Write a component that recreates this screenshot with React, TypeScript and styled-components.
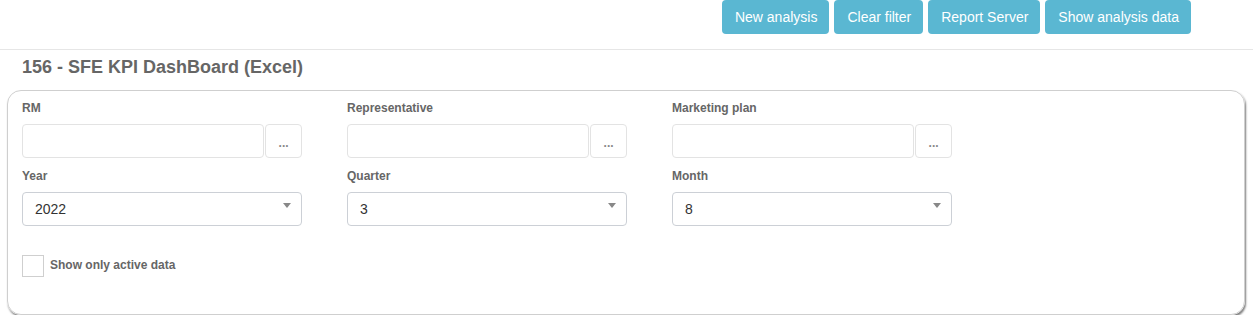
import styled, { createGlobalStyle } from "styled-components";

const GlobalStyle = createGlobalStyle`
  body {
    margin: 0;
    background: #fff;
    font-family: "Liberation Sans", Arial, sans-serif;
  }
`;

const lookupFields = ["RM", "Representative", "Marketing plan"];
const selectFields = [
  { label: "Year", value: "2022" },
  { label: "Quarter", value: "3" },
  { label: "Month", value: "8" },
];
const actions = ["New analysis", "Clear filter", "Report Server", "Show analysis data"];

export default function App() {
  return (
    <>
      <GlobalStyle />
      <TopBar>
        {actions.map((a) => (
          <ActionButton key={a}>{a}</ActionButton>
        ))}
      </TopBar>
      <Title>156 - SFE KPI DashBoard (Excel)</Title>
      <FilterCard>
        <FieldGrid>
          {lookupFields.map((f) => (
            <Field key={f}>
              <Label>{f}</Label>
              <LookupGroup>
                <TextInput />
                <DotsButton>...</DotsButton>
              </LookupGroup>
            </Field>
          ))}
          {selectFields.map((f) => (
            <Field key={f.label}>
              <Label>{f.label}</Label>
              <Select>
                <span>{f.value}</span>
                <Caret />
              </Select>
            </Field>
          ))}
        </FieldGrid>
        <CheckRow>
          <CheckBox />
          <CheckLabel>Show only active data</CheckLabel>
        </CheckRow>
      </FilterCard>
    </>
  );
}

const TopBar = styled.div`
  display: flex;
  justify-content: flex-end;
  align-items: flex-start;
  gap: 5px;
  height: 49px;
  padding-right: 62px;
  border-bottom: 1px solid #e6e6e6;
`;

const ActionButton = styled.div`
  display: flex;
  align-items: center;
  height: 34px;
  padding: 0 12px 0 13px;
  background: #5ab7d2;
  color: #fff;
  font-size: 14px;
  border-radius: 4px;
  box-sizing: border-box;
  cursor: pointer;
`;

const Title = styled.h1`
  margin: 0;
  padding: 7px 0 0 22px;
  height: 33px;
  box-sizing: border-box;
  font-size: 18px;
  font-weight: 700;
  line-height: 20px;
  color: #666;
`;

const FilterCard = styled.div`
  margin: 7px 0 0 7px;
  width: 1238px;
  box-sizing: border-box;
  border: 1px solid #cfcfcf;
  border-radius: 14px;
  box-shadow: 1px 2px 2px rgba(0, 0, 0, 0.5);
  padding: 9px 14px 37px;
`;

const FieldGrid = styled.div`
  display: grid;
  grid-template-columns: repeat(3, 325px);
  row-gap: 10px;
`;

const Field = styled.div`
  display: flex;
  flex-direction: column;
  width: 280px;
`;

const Label = styled.label`
  font-size: 12px;
  font-weight: 700;
  line-height: 17px;
  color: #666;
  margin-bottom: 7px;
`;

const LookupGroup = styled.div`
  display: flex;
  gap: 1px;
`;

const TextInput = styled.div`
  width: 243px;
  height: 34px;
  box-sizing: border-box;
  border: 1px solid #e3e3e3;
  border-radius: 4px;
`;

const DotsButton = styled.div`
  width: 37px;
  height: 34px;
  box-sizing: border-box;
  border: 1px solid #e3e3e3;
  border-radius: 4px;
  display: flex;
  justify-content: center;
  align-items: center;
  padding-top: 3px;
  font-size: 12px;
  font-weight: 700;
  color: #888;
`;

const Select = styled.div`
  height: 34px;
  box-sizing: border-box;
  border: 1px solid #ccd0d6;
  border-radius: 4px;
  display: flex;
  align-items: center;
  justify-content: space-between;
  padding: 0 10px 0 12px;
  font-size: 14px;
  color: #333;
`;

const Caret = styled.span`
  width: 0;
  height: 0;
  border-left: 4px solid transparent;
  border-right: 4px solid transparent;
  border-top: 5px solid #888;
  margin-bottom: 8px;
`;

const CheckRow = styled.div`
  display: flex;
  align-items: center;
  gap: 6px;
  margin-top: 29px;
`;

const CheckBox = styled.div`
  width: 22px;
  height: 22px;
  box-sizing: border-box;
  border: 1px solid #cfcfcf;
`;

const CheckLabel = styled.span`
  font-size: 12px;
  font-weight: 700;
  color: #666;
  margin-top: -3px;
`;
